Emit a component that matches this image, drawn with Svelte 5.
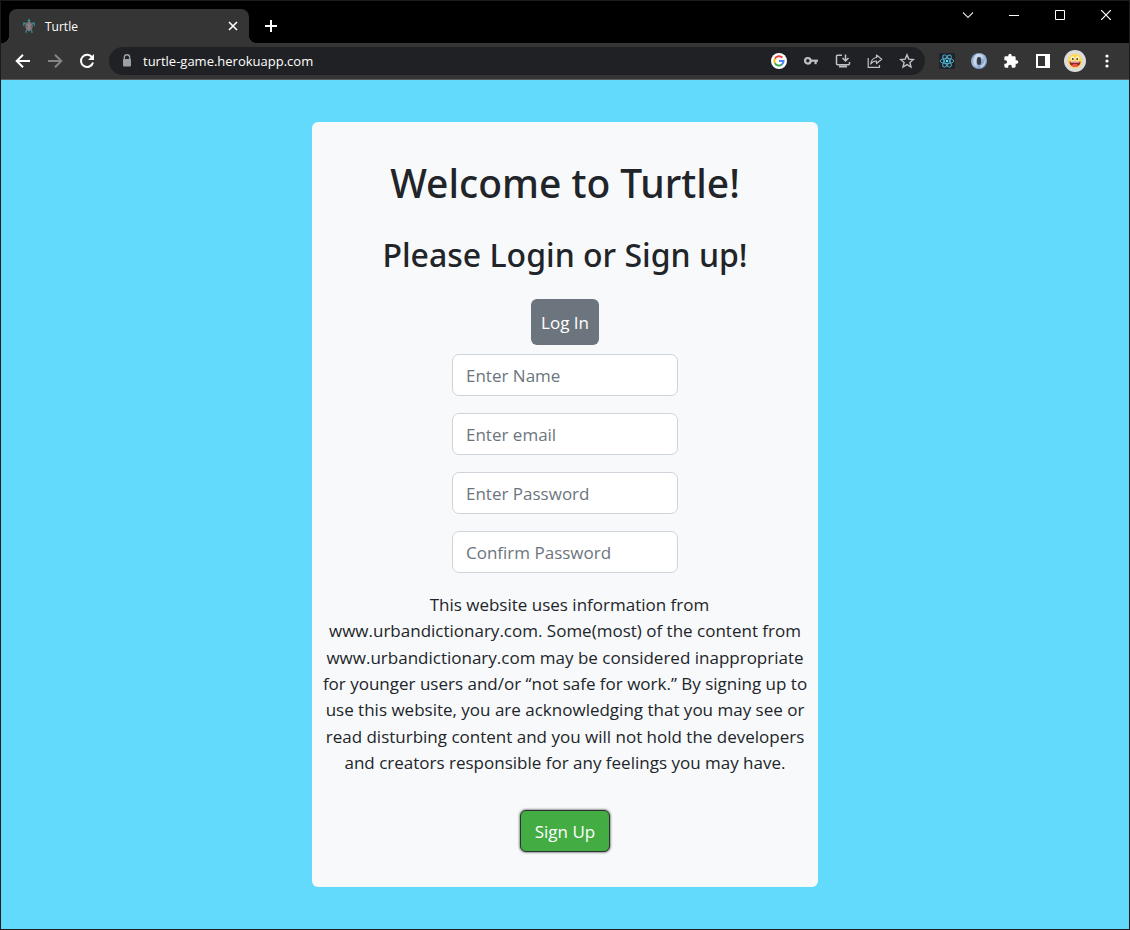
<script>
  const fields = [
    { id: 'name', type: 'text', label: 'Enter Name' },
    { id: 'email', type: 'email', label: 'Enter email' },
    { id: 'password', type: 'password', label: 'Enter Password' },
    { id: 'confirm', type: 'password', label: 'Confirm Password' }
  ];
  const notice = [
    '\u00a0\u00a0This website uses information from',
    'www.urbandictionary.com. Some(most) of the content from',
    'www.urbandictionary.com may be considered inappropriate',
    'for younger users and/or “not safe for work.” By signing up to',
    'use this website, you are acknowledging that you may see or',
    'read disturbing content and you will not hold the developers',
    'and creators responsible for any feelings you may have.'
  ];
</script>

<div class="window">
  <header>
    <div class="strip">
      <div class="tab">
        <svg class="favicon" width="16" height="16" viewBox="0 0 16 16">
          <g stroke="#2f8f92" stroke-width="1.300" fill="none" stroke-linecap="round">
            <path d="M5 5.500L2.800 5v2.500M11 5.500l2.200-.5v2.500M5.500 12L5 14.300M10.500 12l.5 2.300" />
          </g>
          <path d="M8 3.500l3.300 1.500.7 3.500-1.500 3.500L8 13.500 5.500 12 4 8.500 4.700 5z" fill="#71686f" />
          <path d="M8 4v9M5.500 6.500L8 8l2.500-1.500M5.500 10.500L8 9.500l2.500 1" stroke="#a09299" stroke-width=".8" fill="none" />
          <circle cx="8" cy="2.500" r="1.200" fill="#3aa0a0" />
        </svg>
        <span class="title">Turtle</span>
        <button class="small" aria-label="Close tab">
          <svg width="10" height="10" viewBox="0 0 10 10" stroke="#fff" stroke-width="1.6"><path d="M1 1l8 8M9 1L1 9" /></svg>
        </button>
      </div>
      <button class="new" aria-label="New tab">
        <svg width="12" height="12" viewBox="0 0 12 12" stroke="#fff" stroke-width="2"><path d="M6 0v12M0 6h12" /></svg>
      </button>
      <div class="controls">
        <button aria-label="Search tabs"><svg width="12" height="12" viewBox="0 0 12 12" fill="none" stroke="#ddd" stroke-width="1.100"><path d="M1 3.500l5 5 5-5" /></svg></button>
        <button aria-label="Minimize"><svg width="10" height="10" viewBox="0 0 10 10"><path d="M0 5h10v1H0z" fill="#fff" /></svg></button>
        <button aria-label="Maximize"><svg width="10" height="10" viewBox="0 0 10 10" fill="none" stroke="#fff"><path d="M.5.5h9v9h-9z" /></svg></button>
        <button aria-label="Close"><svg width="10" height="10" viewBox="0 0 10 10" stroke="#fff" stroke-width="1.200"><path d="M0 0l10 10M10 0L0 10" /></svg></button>
      </div>
    </div>

    <div class="toolbar">
      <div class="icons">
        <button aria-label="Back"><svg width="16" height="16" viewBox="0 0 16 16" fill="none" stroke="#fff" stroke-width="2"><path d="M15 8H2.500M8 1.700L1.700 8 8 14.300" /></svg></button>
        <button aria-label="Forward"><svg width="16" height="16" viewBox="0 0 16 16" fill="none" stroke="#858585" stroke-width="2"><path d="M1 8h12.500M8 1.700L14.300 8 8 14.300" /></svg></button>
        <button aria-label="Reload"><svg width="16" height="16" viewBox="0 0 16 16"><path d="M13.300 4.700A6.100 6.100 0 1 0 14 9.500" fill="none" stroke="#fff" stroke-width="2" /><path d="M15 1v6H9z" fill="#fff" /></svg></button>
      </div>
      <div class="omnibox">
        <svg class="lock" width="10" height="14" viewBox="0 0 10 14"><path d="M2.300 6V3.500a2.700 2.700 0 0 1 5.400 0V6" fill="none" stroke="#9aa0a6" stroke-width="1.400" /><rect x="1" y="5" width="8" height="7.500" rx="1" fill="#9aa0a6" /></svg>
        <input class="url" type="text" aria-label="Address" value="turtle-game.herokuapp.com" />
        <div class="icons">
          <button aria-label="Google">
            <svg width="16" height="16" viewBox="0 0 16 16">
              <circle cx="8" cy="8" r="8" fill="#fff" />
              <g fill="none" stroke-width="1.900">
                <path d="M11.400 4.700A4.700 4.700 0 0 0 3.900 5.700" stroke="#ea4335" />
                <path d="M3.900 5.700a4.700 4.700 0 0 0 0 4.600" stroke="#fbbc05" />
                <path d="M3.900 10.300a4.700 4.700 0 0 0 7 1.300" stroke="#34a853" />
                <path d="M10.900 11.600A4.700 4.700 0 0 0 12.600 8H8" stroke="#4285f4" />
              </g>
            </svg>
          </button>
          <button aria-label="Passwords"><svg width="16" height="16" viewBox="0 0 16 16" fill="none" stroke="#bdc1c6"><circle cx="4.800" cy="7.800" r="2.800" stroke-width="2.200" /><path d="M8 7.700h7" stroke-width="2.200" /><path d="M12.600 8v3.200" stroke-width="2.200" /></svg></button>
          <button aria-label="Install"><svg width="16" height="16" viewBox="0 0 16 16" fill="none" stroke="#bdc1c6" stroke-width="1.500"><path d="M7 2.200H2.500a1 1 0 0 0-1 1v7.600a1 1 0 0 0 1 1h11a1 1 0 0 0 1-1V9M10.500 1.500v6M7.500 5l3 3 3-3" /><path d="M4 13.500h8" stroke-width="2" /></svg></button>
          <button aria-label="Share"><svg width="16" height="16" viewBox="0 0 16 16" fill="none" stroke="#bdc1c6" stroke-width="1.200"><path d="M1.200 5v9.400h11.300V12" /><path d="M9.500 2l5.200 4.300-5.200 4.200V8C7 8 5 8.900 3.700 11c.4-3 2.300-6 5.800-6.500z" stroke-linejoin="round" /></svg></button>
          <button aria-label="Bookmark"><svg width="16" height="16" viewBox="0 0 16 16" fill="none" stroke="#bdc1c6" stroke-width="1.400"><path d="M8 1.900l1.800 4.200 4.600.4-3.500 3 1.100 4.500L8 11.600 4 14l1.100-4.500-3.500-3 4.600-.4z" /></svg></button>
        </div>
      </div>
      <div class="icons">
        <button aria-label="React tools">
          <svg width="16" height="16" viewBox="0 0 16 16"><rect width="16" height="16" rx="1" fill="#20232a" /><g fill="none" stroke="#4fb4d1" stroke-width=".9"><ellipse cx="8" cy="8" rx="6.800" ry="2.600" /><ellipse cx="8" cy="8" rx="6.800" ry="2.600" transform="rotate(60 8 8)" /><ellipse cx="8" cy="8" rx="6.800" ry="2.600" transform="rotate(120 8 8)" /></g><circle cx="8" cy="8" r="1.300" fill="#61dafb" /></svg>
        </button>
        <button aria-label="JSON viewer">
          <svg width="16" height="16" viewBox="0 0 16 16">
            <defs><linearGradient id="ring" x1="0" y1="0" x2="1" y2="1"><stop offset="0" stop-color="#6f93c0" /><stop offset=".45" stop-color="#a9c1de" /><stop offset="1" stop-color="#6087b8" /></linearGradient></defs>
            <circle cx="8" cy="8" r="8" fill="url(#ring)" />
            <path d="M6 1C1 4 1 11 6.500 14.500 4.500 11 4.500 5 8 3.500 10.500 3 12 5 12.500 7 13 3 10 .5 6 1z" fill="#c9d8ea" />
            <path d="M10 15c4-2 5.500-6 4-10-.2 4-2 7-5 8z" fill="#bccfe6" />
            <ellipse cx="8" cy="8" rx="2.200" ry="4" fill="#353b45" />
          </svg>
        </button>
        <button aria-label="Extensions"><svg width="16" height="16" viewBox="0 0 24 24" fill="#fff"><path d="M20.500 11H19V7a2 2 0 0 0-2-2h-4V3.500a2.500 2.500 0 0 0-5 0V5H4a2 2 0 0 0-2 2v3.800h1.500a2.700 2.700 0 0 1 0 5.400H2V20a2 2 0 0 0 2 2h3.800v-1.500a2.700 2.700 0 0 1 5.400 0V22H17a2 2 0 0 0 2-2v-4h1.500a2.500 2.500 0 0 0 0-5z" /></svg></button>
        <button aria-label="Side panel"><svg width="14" height="14" viewBox="0 0 14 14"><path d="M0 0h14v14H0zM2 2v10h7V2z" fill="#fff" fill-rule="evenodd" /></svg></button>
        <button aria-label="Profile">
          <svg width="22" height="22" viewBox="0 0 22 22"><circle cx="11" cy="11" r="11" fill="#dcdcdc" /><circle cx="11" cy="11" r="7.300" fill="#ffd659" /><ellipse cx="8.500" cy="8.500" rx="2" ry="2.300" fill="#fff3c4" /><ellipse cx="13.500" cy="8.500" rx="2" ry="2.300" fill="#fff3c4" /><circle cx="8.800" cy="9" r=".9" fill="#4b321d" /><circle cx="13.200" cy="9" r=".9" fill="#4b321d" /><path d="M5.500 11.500h11c0 7-11 7-11 0z" fill="#8c1f20" /><path d="M6.500 11.500h9v1h-9z" fill="#fff" /><path d="M7.500 15.500c2-2.500 5-2.500 7 0-2 2-5 2-7 0z" fill="#ef5550" /></svg>
        </button>
        <button aria-label="Menu"><svg width="4" height="14" viewBox="0 0 4 14" fill="#fff"><circle cx="2" cy="2" r="1.600" /><circle cx="2" cy="7" r="1.600" /><circle cx="2" cy="12" r="1.600" /></svg></button>
      </div>
    </div>
  </header>

  <main>
    <form class="card" onsubmit={(e) => e.preventDefault()}>
      <h1>Welcome to Turtle!</h1>
      <h2>Please Login or Sign up!</h2>
      <button class="login" type="button">Log In</button>
      <div class="fields">
        {#each fields as f}
          <input id={f.id} type={f.type} placeholder={f.label} aria-label={f.label} />
        {/each}
      </div>
      <p>
        {#each notice as line, i}{#if i}<br />{/if}{line}{/each}
      </p>
      <button class="signup" type="submit">Sign Up</button>
    </form>
  </main>
</div>

<style>
  :global(body) {
    margin: 0;
  }
  .window,
  .window * {
    box-sizing: border-box;
  }
  .window {
    min-height: 100vh;
    display: flex;
    flex-direction: column;
    border: 1px solid #1b1b1b;
    background: #61dafb;
    font-family: "Open Sans", "Noto Sans", sans-serif;
    color: #212529;
  }
  button {
    border: 0;
    padding: 0;
    margin: 0;
    background: none;
    font: inherit;
    color: inherit;
  }
  svg {
    display: block;
    flex: none;
  }
  .strip {
    display: flex;
    height: 42px;
    padding-left: 8px;
    background: #000;
  }
  .tab {
    position: relative;
    display: flex;
    align-items: center;
    width: 240px;
    margin-top: 8px;
    padding: 0 8px 0 12px;
    background: #353535;
    border-radius: 8px 8px 0 0;
    color: #fff;
    font-size: 12px;
  }
  .tab::before,
  .tab::after {
    content: "";
    position: absolute;
    bottom: 0;
    width: 8px;
    height: 8px;
  }
  .tab::before {
    right: 100%;
    background: radial-gradient(circle at 0 0, transparent 8px, #353535 8px);
  }
  .tab::after {
    left: 100%;
    background: radial-gradient(circle at 100% 0, transparent 8px, #353535 8px);
  }
  .title {
    flex: 1;
    margin-left: 8px;
  }
  .small,
  .new,
  .icons button,
  .controls button {
    display: flex;
    align-items: center;
    justify-content: center;
  }
  .small {
    width: 16px;
    height: 16px;
  }
  .new {
    width: 28px;
    height: 34px;
    margin: 8px 0 0 8px;
  }
  .controls {
    display: flex;
    margin-left: auto;
  }
  .controls button {
    width: 46px;
    height: 28px;
  }
  .toolbar {
    display: flex;
    align-items: center;
    gap: 6px;
    height: 37px;
    padding: 0 6px;
    background: #353535;
    border-bottom: 1px solid #5c5c5c;
  }
  .icons {
    display: flex;
  }
  .icons button {
    width: 32px;
    height: 28px;
  }
  .omnibox {
    flex: 1;
    display: flex;
    align-items: center;
    height: 28px;
    padding: 0 2px 0 13px;
    border-radius: 14px;
    background: #202124;
  }
  .url {
    flex: 1;
    min-width: 0;
    margin-left: 11px;
    padding: 0;
    border: 0;
    outline: 0;
    background: none;
    color: #fff;
    font: 13px "Open Sans", "Noto Sans", sans-serif;
  }
  main {
    flex: 1;
    padding: 42px 16px;
  }
  .card {
    display: flex;
    flex-direction: column;
    align-items: center;
    width: 45%;
    min-width: 506px;
    max-width: 720px;
    margin: 0 auto;
    padding: 35px 10px;
    border-radius: 6px;
    background: #f8f9fb;
    font-size: 17px;
    text-align: center;
  }
  h1,
  h2 {
    margin: 0;
    font-family: "Noto Sans", "Open Sans", sans-serif;
    font-weight: 500;
  }
  h1 {
    font-size: 39px;
    line-height: 52px;
  }
  h2 {
    margin-top: 26px;
    font-size: 32px;
    line-height: 40px;
  }
  .login {
    height: 46px;
    margin-top: 24px;
    padding: 0 10px;
    border-radius: 6px;
    background: #6c757d;
    color: #fff;
  }
  .fields {
    display: flex;
    flex-direction: column;
    gap: 17px;
    margin-top: 9px;
  }
  .fields input {
    width: 226px;
    height: 42px;
    padding: 0 13px;
    border: 1px solid #ced4da;
    border-radius: 7px;
    background: #fff;
    color: #212529;
    font: inherit;
  }
  .fields input::placeholder {
    color: #6c757d;
    opacity: 1;
  }
  p {
    margin: 19px 0 0;
    line-height: 1.55;
    white-space: nowrap;
  }
  .signup {
    height: 42px;
    margin-top: 34px;
    padding: 0 14px;
    border: 1px solid #2b332d;
    border-radius: 6px;
    background: #43ac43;
    box-shadow: 0 0 2px 1px rgba(0, 0, 0, 0.4);
    color: #fff;
  }
</style>
